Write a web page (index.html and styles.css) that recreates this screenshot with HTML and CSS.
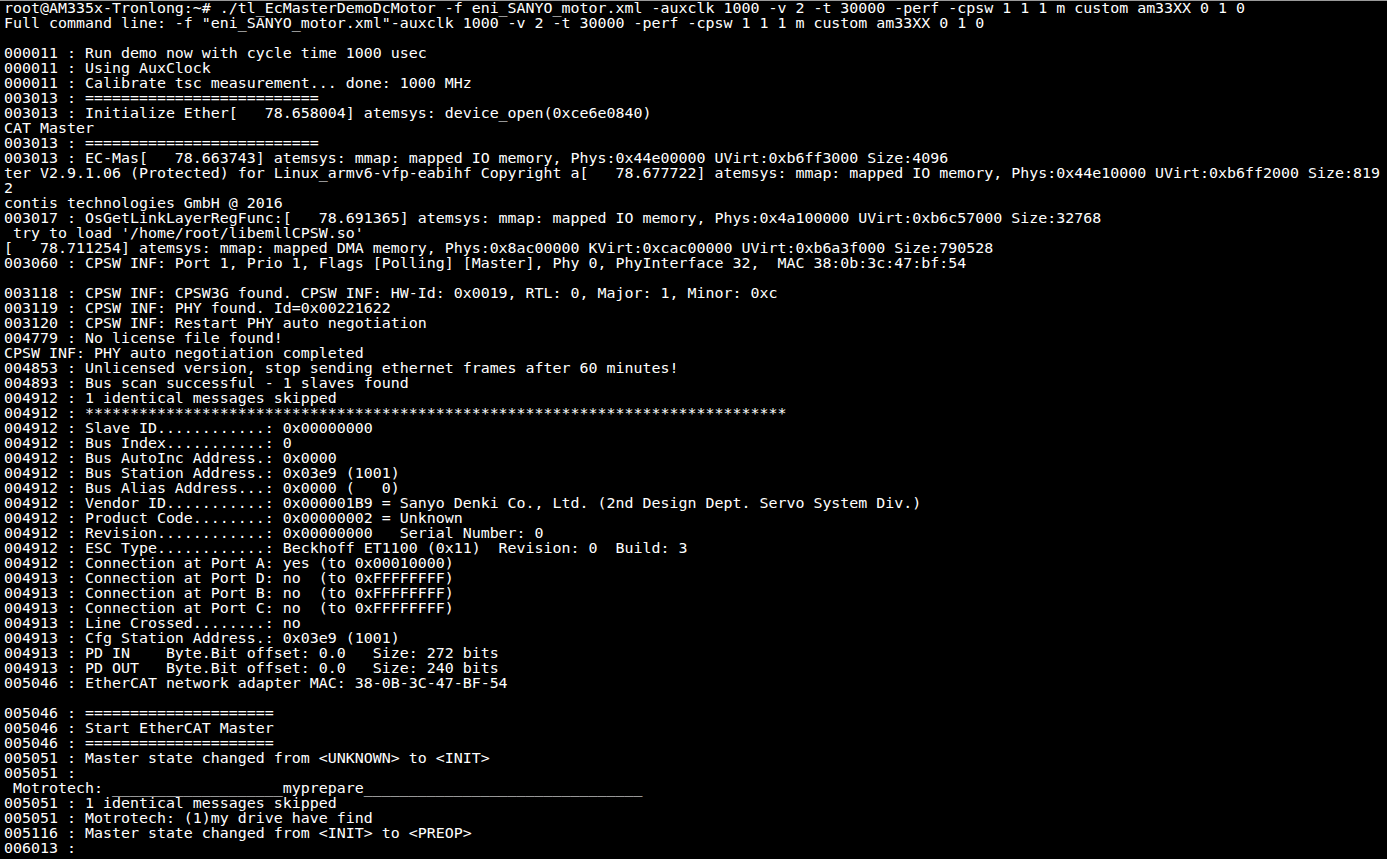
FILE: index.html
```html
<!DOCTYPE html>
<html lang="en">
<head>
<meta charset="utf-8">
<title>Terminal</title>
<link rel="stylesheet" href="styles.css">
</head>
<body>
<div class="terminal">
<pre class="output">root@AM335x-Tronlong:~# ./tl_EcMasterDemoDcMotor -f eni_SANYO_motor.xml -auxclk 1000 -v 2 -t 30000 -perf -cpsw 1 1 1 m custom am33XX 0 1 0
Full command line: -f "eni_SANYO_motor.xml"-auxclk 1000 -v 2 -t 30000 -perf -cpsw 1 1 1 m custom am33XX 0 1 0

000011 : Run demo now with cycle time 1000 usec
000011 : Using AuxClock
000011 : Calibrate tsc measurement... done: 1000 MHz
003013 : ==========================
003013 : Initialize Ether[   78.658004] atemsys: device_open(0xce6e0840)
CAT Master
003013 : ==========================
003013 : EC-Mas[   78.663743] atemsys: mmap: mapped IO memory, Phys:0x44e00000 UVirt:0xb6ff3000 Size:4096
ter V2.9.1.06 (Protected) for Linux_armv6-vfp-eabihf Copyright a[   78.677722] atemsys: mmap: mapped IO memory, Phys:0x44e10000 UVirt:0xb6ff2000 Size:819
2
contis technologies GmbH @ 2016
003017 : OsGetLinkLayerRegFunc:[   78.691365] atemsys: mmap: mapped IO memory, Phys:0x4a100000 UVirt:0xb6c57000 Size:32768
 try to load '/home/root/libemllCPSW.so'
[   78.711254] atemsys: mmap: mapped DMA memory, Phys:0x8ac00000 KVirt:0xcac00000 UVirt:0xb6a3f000 Size:790528
003060 : CPSW INF: Port 1, Prio 1, Flags [Polling] [Master], Phy 0, PhyInterface 32,  MAC 38:0b:3c:47:bf:54

003118 : CPSW INF: CPSW3G found. CPSW INF: HW-Id: 0x0019, RTL: 0, Major: 1, Minor: 0xc
003119 : CPSW INF: PHY found. Id=0x00221622
003120 : CPSW INF: Restart PHY auto negotiation
004779 : No license file found!
CPSW INF: PHY auto negotiation completed
004853 : Unlicensed version, stop sending ethernet frames after 60 minutes!
004893 : Bus scan successful - 1 slaves found
004912 : 1 identical messages skipped
004912 : ******************************************************************************
004912 : Slave ID............: 0x00000000
004912 : Bus Index...........: 0
004912 : Bus AutoInc Address.: 0x0000
004912 : Bus Station Address.: 0x03e9 (1001)
004912 : Bus Alias Address...: 0x0000 (   0)
004912 : Vendor ID...........: 0x000001B9 = Sanyo Denki Co., Ltd. (2nd Design Dept. Servo System Div.)
004912 : Product Code........: 0x00000002 = Unknown
004912 : Revision............: 0x00000000   Serial Number: 0
004912 : ESC Type............: Beckhoff ET1100 (0x11)  Revision: 0  Build: 3
004912 : Connection at Port A: yes (to 0x00010000)
004913 : Connection at Port D: no  (to 0xFFFFFFFF)
004913 : Connection at Port B: no  (to 0xFFFFFFFF)
004913 : Connection at Port C: no  (to 0xFFFFFFFF)
004913 : Line Crossed........: no
004913 : Cfg Station Address.: 0x03e9 (1001)
004913 : PD IN    Byte.Bit offset: 0.0   Size: 272 bits
004913 : PD OUT   Byte.Bit offset: 0.0   Size: 240 bits
005046 : EtherCAT network adapter MAC: 38-0B-3C-47-BF-54

005046 : =====================
005046 : Start EtherCAT Master
005046 : =====================
005051 : Master state changed from &lt;UNKNOWN&gt; to &lt;INIT&gt;
005051 :
 Motrotech: ___________________myprepare_______________________________
005051 : 1 identical messages skipped
005051 : Motrotech: (1)my drive have find
005116 : Master state changed from &lt;INIT&gt; to &lt;PREOP&gt;
006013 :</pre>
</div>
</body>
</html>
```

FILE: styles.css
```css
html, body {
  margin: 0;
  padding: 0;
  background: #000;
  height: 100%;
  overflow: hidden;
}

.terminal {
  border-top: 1px solid #9a9a9a;
  background: #000;
  height: 100%;
  box-sizing: border-box;
  padding-left: 4px;
}

.output {
  margin: 0;
  font-family: "DejaVu Sans Mono", "Liberation Mono", monospace;
  font-size: 14.95px;
  line-height: 15px;
  color: #ffffff;
  white-space: pre;
}
```
